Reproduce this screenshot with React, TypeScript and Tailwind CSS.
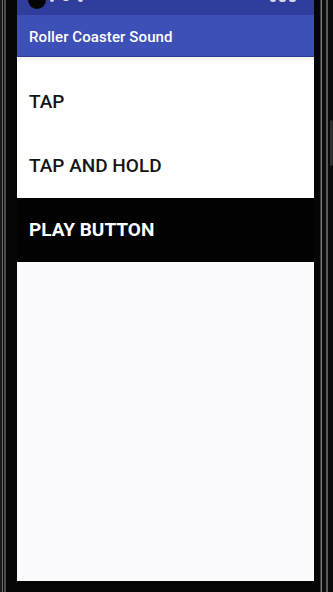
import React from 'react';

const font = { fontFamily: 'Roboto, "Noto Sans", sans-serif' };

// 左右のベゼルは細い灰色のラインで縁取りを表現
const LeftBezel: React.FC = () => (
    <div className="flex h-full w-[17px] shrink-0">
        <div className="w-[2px] bg-[#1a1a1a]" />
        <div className="w-px bg-[#6b6b6b]" />
        <div className="w-px bg-[#0a0a0a]" />
        <div className="w-[2px] bg-[#4a4a4a]" />
        <div className="flex-1 bg-[#050505]" />
    </div>
);

const RightBezel: React.FC = () => (
    <div className="flex h-full flex-1">
        <div className="w-[6px] bg-[#050505]" />
        <div className="w-px bg-[#3c3c3c]" />
        <div className="w-px bg-[#7a7a7a]" />
        <div className="w-[4px] bg-[#0c0c0c]" />
        <div className="w-[2px] bg-[#5a5a5a]" />
        <div className="relative flex-1 bg-[#0a0a0a]">
            <div className="absolute left-[2px] top-[120px] h-[46px] w-[3px] rounded-sm bg-[#2e2e2e]" />
        </div>
    </div>
);

const StatusBar: React.FC = () => (
    <div className="relative h-[15px] overflow-hidden bg-[#2f3d9c]">
        <div className="absolute left-[11px] top-[-9px] h-[18px] w-[18px] rounded-full bg-[#050505]" />
        <div className="absolute left-[33px] top-[-3px] flex items-start gap-[9px]">
            <span className="h-[5px] w-[4px] rounded-sm bg-white/80" />
            <span className="h-[4px] w-[6px] rounded-sm bg-white/80" />
            <span className="h-[5px] w-[5px] rounded-sm bg-white/80" />
        </div>
        <div className="absolute right-[18px] top-[-3px] flex items-start gap-[3px]">
            <span className="h-[5px] w-[6px] rounded-sm bg-white/80" />
            <span className="h-[5px] w-[7px] rounded-sm bg-white/80" />
            <span className="h-[5px] w-[7px] rounded-sm bg-white/80" />
        </div>
    </div>
);

const ITEMS = [
    { label: 'TAP', active: false },
    { label: 'TAP AND HOLD', active: false },
    { label: 'PLAY BUTTON', active: true },
];

const App: React.FC = () => {
    return (
        <div className="flex h-[592px] w-[333px] overflow-hidden bg-black" style={font}>
            <LeftBezel />
            <div className="flex h-full w-[297px] shrink-0 flex-col">
                <div className="flex h-[581px] flex-col bg-[#fbfafd]">
                    <StatusBar />
                    <div className="flex h-[42px] items-center border-b border-[#2c3a8f] bg-[#3d50b7] px-[12px] pt-[4px]">
                        <span className="text-[15px] font-medium tracking-[0.1px] text-white">
                            Roller Coaster Sound
                        </span>
                    </div>
                    <div className="bg-white">
                        <div className="h-[5px] bg-gradient-to-b from-[#f1f1f3] to-white" />
                        <ul className="pt-[8px]">
                            {ITEMS.map((item) => (
                                <li
                                    key={item.label}
                                    className={
                                        item.active
                                            ? 'flex h-[64px] items-center bg-[#030203] px-[12px] text-[19px] font-bold text-white'
                                            : 'flex h-[64px] items-center bg-white px-[12px] text-[19px] font-medium text-[#141414]'
                                    }
                                >
                                    {item.label}
                                </li>
                            ))}
                        </ul>
                    </div>
                </div>
                <div className="flex-1 bg-[#050505]" />
            </div>
            <RightBezel />
        </div>
    );
};

export default App;
